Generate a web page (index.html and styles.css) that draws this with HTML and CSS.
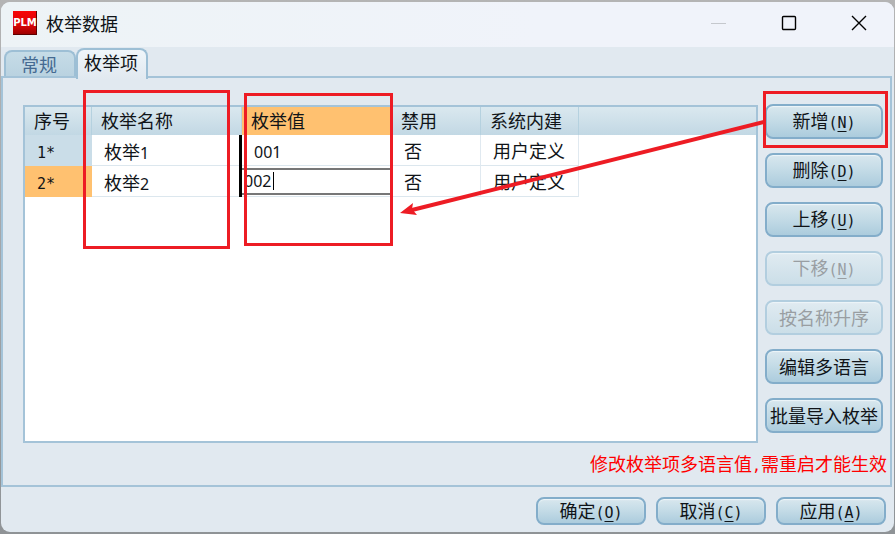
FILE: index.html
```
<!DOCTYPE html>
<html lang="zh-CN">
<head>
<meta charset="utf-8">
<title>枚举数据</title>
<link rel="stylesheet" href="styles.css">
</head>
<body>
<main class="window">
  <header class="titlebar">
    <svg class="logo" viewBox="0 0 24 24" role="img" aria-label="PLM">
      <defs><linearGradient id="red" x1="0" y1="0" x2="0" y2="1"><stop offset="0" stop-color="#f80508"/><stop offset=".6" stop-color="#d80406"/><stop offset="1" stop-color="#980000"/></linearGradient></defs>
      <rect width="24" height="24" fill="url(#red)"/>
      <path d="M23.500 0V23.500H0" fill="none" stroke="#5c0000"/>
      <text x="12" y="15" text-anchor="middle" class="logo-text">PLM</text>
    </svg>
    <h1 class="title">枚举数据</h1>
    <div class="controls">
      <button class="control" aria-label="最小化" disabled><svg viewBox="0 0 16 16"><path d="M0 8.500H15" stroke="#c5c8cd"/></svg></button>
      <button class="control" aria-label="最大化"><svg viewBox="0 0 16 16"><rect x="1.500" y="1.500" width="13" height="13" rx="1" fill="none" stroke="#000" stroke-width="1.400"/></svg></button>
      <button class="control" aria-label="关闭"><svg viewBox="0 0 16 16"><path d="M1 1L15 15M15 1L1 15" stroke="#000" stroke-width="1.400"/></svg></button>
    </div>
  </header>
  <nav class="tabs">
    <button class="tab">常规</button>
    <button class="tab active">枚举项</button>
  </nav>
  <section class="panel">
    <div class="content">
      <div class="grid">
        <table>
          <colgroup><col class="c-no"><col class="c-name"><col class="c-value"><col class="c-off"><col class="c-sys"><col></colgroup>
          <thead>
            <tr><th>序号</th><th>枚举名称</th><th class="hot">枚举值</th><th>禁用</th><th>系统内建</th><th class="rest"></th></tr>
          </thead>
          <tbody>
            <tr><td class="num"><span class="en">1*</span></td><td class="name">枚举<span class="digit">1</span></td><td><span class="digit">001</span></td><td>否</td><td>用户定义</td><td class="rest"></td></tr>
            <tr><td class="num hot"><span class="en">2*</span></td><td class="name">枚举<span class="digit">2</span></td><td class="editing"><div class="editor"><input class="digit" value="002" size="3" aria-label="枚举值"><i class="caret"></i></div></td><td>否</td><td>用户定义</td><td class="rest"></td></tr>
          </tbody>
        </table>
      </div>
      <div class="actions">
        <button class="btn">新增<span class="en">(<u>N</u>)</span></button>
        <button class="btn">删除<span class="en">(<u>D</u>)</span></button>
        <button class="btn">上移<span class="en">(<u>U</u>)</span></button>
        <button class="btn" disabled>下移<span class="en">(<u>N</u>)</span></button>
        <button class="btn" disabled>按名称升序</button>
        <button class="btn">编辑多语言</button>
        <button class="btn">批量导入枚举</button>
      </div>
    </div>
    <p class="notice">修改枚举项多语言值<span class="en">,</span>需重启才能生效</p>
  </section>
  <footer class="footer">
    <button class="btn">确定<span class="en">(<u>O</u>)</span></button>
    <button class="btn">取消<span class="en">(<u>C</u>)</span></button>
    <button class="btn">应用<span class="en">(<u>A</u>)</span></button>
  </footer>
</main>
<svg class="marks" width="895" height="534" viewBox="0 0 895 534" aria-hidden="true">
  <g fill="none" stroke="#ed1c24" stroke-width="3">
    <rect x="84.500" y="91.500" width="144" height="156"/>
    <rect x="245.500" y="94.500" width="146" height="150"/>
    <rect x="764.500" y="92.500" width="122" height="54"/>
    <path d="M764 122L412 210" stroke-width="4"/>
  </g>
  <path d="M400 213L413 203L412 209L417 215Z" fill="#ed1c24"/>
</svg>
</body>
</html>
```
FILE: styles.css
```
* { box-sizing: border-box; }

body {
  margin: 0;
  padding: 2px 1px;
  min-height: 100vh;
  display: flex;
  background: linear-gradient(#b4b4b4, #a2a6aa 50%, #8f9396);
  font-family: "Noto Sans CJK SC", sans-serif;
  font-size: 18px;
  line-height: 24px;
  color: #101418;
}

button { font: inherit; color: inherit; margin: 0; padding: 0; white-space: nowrap; }

.en { font-family: "DejaVu Sans Mono", monospace; font-size: 15px; line-height: 20px; }
.digit { font-family: "Noto Sans", sans-serif; font-size: 16px; line-height: 20px; }

.window {
  flex: 1;
  display: flex;
  flex-direction: column;
  border-radius: 9px;
  background: #e1e9f0;
  overflow: hidden;
}

.titlebar {
  display: flex;
  align-items: center;
  height: 45px;
  padding: 0 0 3px 12px;
  background: linear-gradient(90deg, #edf3f6, #f0f3fa 60%);
}
.logo { width: 24px; height: 24px; }
.logo-text { font: bold 10px "DejaVu Sans", sans-serif; fill: #fff; }
.title { flex: 1; margin: 0 0 0 9px; font-size: 18px; font-weight: 400; }
.controls { display: flex; }
.control {
  width: 70px;
  height: 42px;
  display: flex;
  align-items: center;
  justify-content: center;
  border: 0;
  background: none;
}
.control svg { width: 16px; height: 16px; }

.tabs { display: flex; align-items: flex-end; height: 30px; padding-left: 3px; }
.tab {
  width: 72px;
  height: 27px;
  padding: 0 2px 4px 0;
  border: 2px solid #9dbfd5;
  border-bottom: 0;
  border-radius: 8px 8px 0 0;
  background: linear-gradient(#c6dce7, #b9d2e0);
  color: #456a91;
}
.tab.active {
  position: relative;
  height: 31px;
  margin-bottom: -2px;
  padding-bottom: 8px;
  background: linear-gradient(#f0f6fa, #e1e9f0);
  color: #101418;
}

.panel {
  flex: 1;
  display: flex;
  flex-direction: column;
  margin: -1px 2px 0 0;
  padding: 27px 7px 0 20px;
  border: 2px solid #a4c3d8;
}
.content { display: flex; gap: 7px; }
.grid { flex: 1; border: 2px solid #a4c3d8; background: #fff; }

table { width: 100%; table-layout: fixed; border-collapse: separate; border-spacing: 0; }
.c-no { width: 67px; }
.c-name { width: 150px; }
.c-value { width: 150px; }
.c-off { width: 89px; }
.c-sys { width: 98px; }
th, td { text-align: left; font-weight: 400; white-space: nowrap; }
th {
  height: 28px;
  padding: 0 0 2px 9px;
  background: linear-gradient(#dae8ef, #c2d8e4);
  border-right: 1px solid #b5d1df;
}
td {
  height: 31px;
  padding: 0 0 0 12px;
  border-right: 1px solid #e0e9f0;
  border-bottom: 1px solid #dce7ee;
}
.num { background: #cadde8; border-color: #cadde8; }
.hot, .num.hot { background: #ffc170; border-color: #ffc170; }
.name {
  border: 0;
  background:
    linear-gradient(#000, #000) right / 3px 100% no-repeat,
    linear-gradient(#dce7ee, #dce7ee) bottom / 100% 1px no-repeat;
}
th.rest, td.rest { border: 0; }
td.editing { padding: 0; }
.editor {
  display: flex;
  align-items: center;
  height: 27px;
  border: solid #777;
  border-width: 2px 0;
  background: #fff;
}
.editor input {
  width: 31px;
  height: 20px;
  padding: 0 0 0 2px;
  border: 0;
  outline: 0;
  background: none;
  color: inherit;
}
.caret { width: 1px; height: 18px; background: #000; }

.actions { display: flex; flex-direction: column; gap: 14px; width: 118px; margin: -1px 0 10px; }
.btn {
  height: 35px;
  padding-bottom: 2px;
  border: 2px solid #83adca;
  border-radius: 8px;
  background: linear-gradient(#d8e7ee, #c5dce7 45%, #acccdd);
  box-shadow: inset 0 1px 1px #eef6f9;
  line-height: 24px;
}
.btn:disabled { border-color: #b2cedf; background: linear-gradient(#e0ebf1, #cbdee8); color: #999ea2; }
.btn u { text-decoration-thickness: 1px; text-underline-offset: 3px; }

.notice { margin: 8px -4px 0 0; text-align: right; color: #f00; white-space: nowrap; }

.footer { display: flex; justify-content: flex-end; gap: 10px; padding: 10px 8px 7px; }
.footer .btn { width: 110px; height: 28px; padding: 0; line-height: 22px; }

.marks { position: absolute; left: 0; top: 0; pointer-events: none; }
```
